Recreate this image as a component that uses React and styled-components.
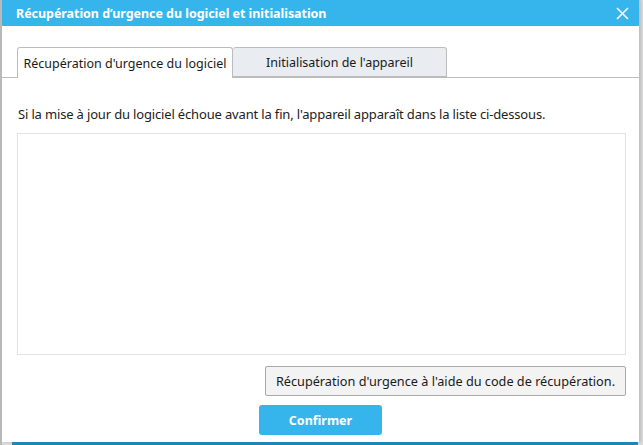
import React from 'react';
import styled, { createGlobalStyle } from 'styled-components';

var GlobalStyle = createGlobalStyle`
  html, body {
    margin: 0;
    padding: 0;
    width: 643px;
    height: 445px;
    overflow: hidden;
    background: #bdbdbd;
  }
  #root {
    width: 643px;
    height: 445px;
  }
`;

var Screen = styled.div`
  box-sizing: border-box;
  width: 643px;
  height: 445px;
  display: flex;
  flex-direction: column;
  background: linear-gradient(90deg, #b9b9b9 0, #b9b9b9 2px, transparent 2px), #d9d9d9;
`;

var Window = styled.div`
  box-sizing: border-box;
  margin-left: 2px;
  width: 637px;
  height: 442px;
  background: #ffffff;
  display: flex;
  flex-direction: column;
  font-family: 'Noto Sans', 'Open Sans', sans-serif;
  box-shadow: 2px 0 2px rgba(0, 0, 0, 0.12);
`;

var TitleBar = styled.div`
  height: 26px;
  flex-shrink: 0;
  background: #36b5ec;
  display: flex;
  align-items: center;
  justify-content: space-between;
  padding: 0 10px 0 14px;
`;

var Title = styled.div`
  color: #ffffff;
  font-weight: 700;
  font-size: 12.5px;
  letter-spacing: -0.05px;
`;

var CloseButton = styled.div`
  width: 14px;
  height: 14px;
  display: flex;
  align-items: center;
  justify-content: center;
  cursor: pointer;
`;

var Body = styled.div`
  flex: 1;
  display: flex;
  flex-direction: column;
  padding-top: 21px;
`;

var TabRow = styled.div`
  display: flex;
  padding-left: 15px;
  border-bottom: 1px solid #bcbcbc;
  height: 30px;
`;

var Tab = styled.div`
  box-sizing: border-box;
  width: ${props => props.width}px;
  height: ${props => (props.active ? '31px' : '30px')};
  margin-bottom: ${props => (props.active ? '-1px' : '0')};
  display: flex;
  align-items: center;
  justify-content: center;
  font-size: 12.5px;
  color: #1a1a1a;
  background: ${props => (props.active ? '#ffffff' : '#e9ecf0')};
  border: 1px solid #bcbcbc;
  border-bottom: ${props => (props.active ? 'none' : '1px solid #bcbcbc')};
  border-left: ${props => (props.first ? '1px solid #bcbcbc' : 'none')};
  border-radius: 3px 3px 0 0;
`;

var Content = styled.div`
  flex: 1;
  display: flex;
  flex-direction: column;
  padding: 0 13px 0 15px;
`;

var Description = styled.div`
  margin-top: 28px;
  font-size: 13px;
  color: #222222;
  letter-spacing: -0.16px;
  line-height: 16px;
  padding-left: 1px;
`;

var DeviceList = styled.div`
  box-sizing: border-box;
  margin-top: 11px;
  height: 222px;
  border: 1px solid #e2e2e2;
  background: #ffffff;
`;

var Actions = styled.div`
  display: flex;
  flex-direction: column;
  align-items: flex-end;
  margin-top: 11px;
`;

var RecoveryButton = styled.button`
  box-sizing: border-box;
  height: 30px;
  width: 361px;
  padding: 0;
  font-family: 'Noto Sans', 'Open Sans', sans-serif;
  font-size: 12.7px;
  color: #1a1a1a;
  background: #f3f3f3;
  border: 1px solid #a9a9a9;
  border-radius: 2px;
`;

var Footer = styled.div`
  display: flex;
  justify-content: center;
  margin-top: 9px;
`;

var ConfirmButton = styled.button`
  width: 123px;
  height: 30px;
  margin-right: 2px;
  font-family: 'Noto Sans', 'Open Sans', sans-serif;
  font-size: 12.5px;
  font-weight: 700;
  color: #ffffff;
  background: #36b5ec;
  border: none;
  border-radius: 3px;
`;

var BottomStrip = styled.div`
  margin-left: 12px;
  width: 626px;
  height: 3px;
  background: #1f87b6;
`;

export default function App() {
  return (
    <>
      <GlobalStyle />
      <Screen>
        <Window>
          <TitleBar>
            <Title>Récupération d’urgence du logiciel et initialisation</Title>
            <CloseButton>
              <svg width="13" height="13" viewBox="0 0 13 13">
                <path d="M1 1 L12 12 M12 1 L1 12" stroke="#ffffff" strokeWidth="1.6" />
              </svg>
            </CloseButton>
          </TitleBar>
          <Body>
            <TabRow>
              <Tab active first width={216}>Récupération d'urgence du logiciel</Tab>
              <Tab width={214}>Initialisation de l'appareil</Tab>
            </TabRow>
            <Content>
              <Description>
                Si la mise à jour du logiciel échoue avant la fin, l'appareil apparaît dans la liste ci-dessous.
              </Description>
              <DeviceList />
              <Actions>
                <RecoveryButton>Récupération d'urgence à l'aide du code de récupération.</RecoveryButton>
              </Actions>
              <Footer>
                <ConfirmButton>Confirmer</ConfirmButton>
              </Footer>
            </Content>
          </Body>
        </Window>
        <BottomStrip />
      </Screen>
    </>
  );
}
